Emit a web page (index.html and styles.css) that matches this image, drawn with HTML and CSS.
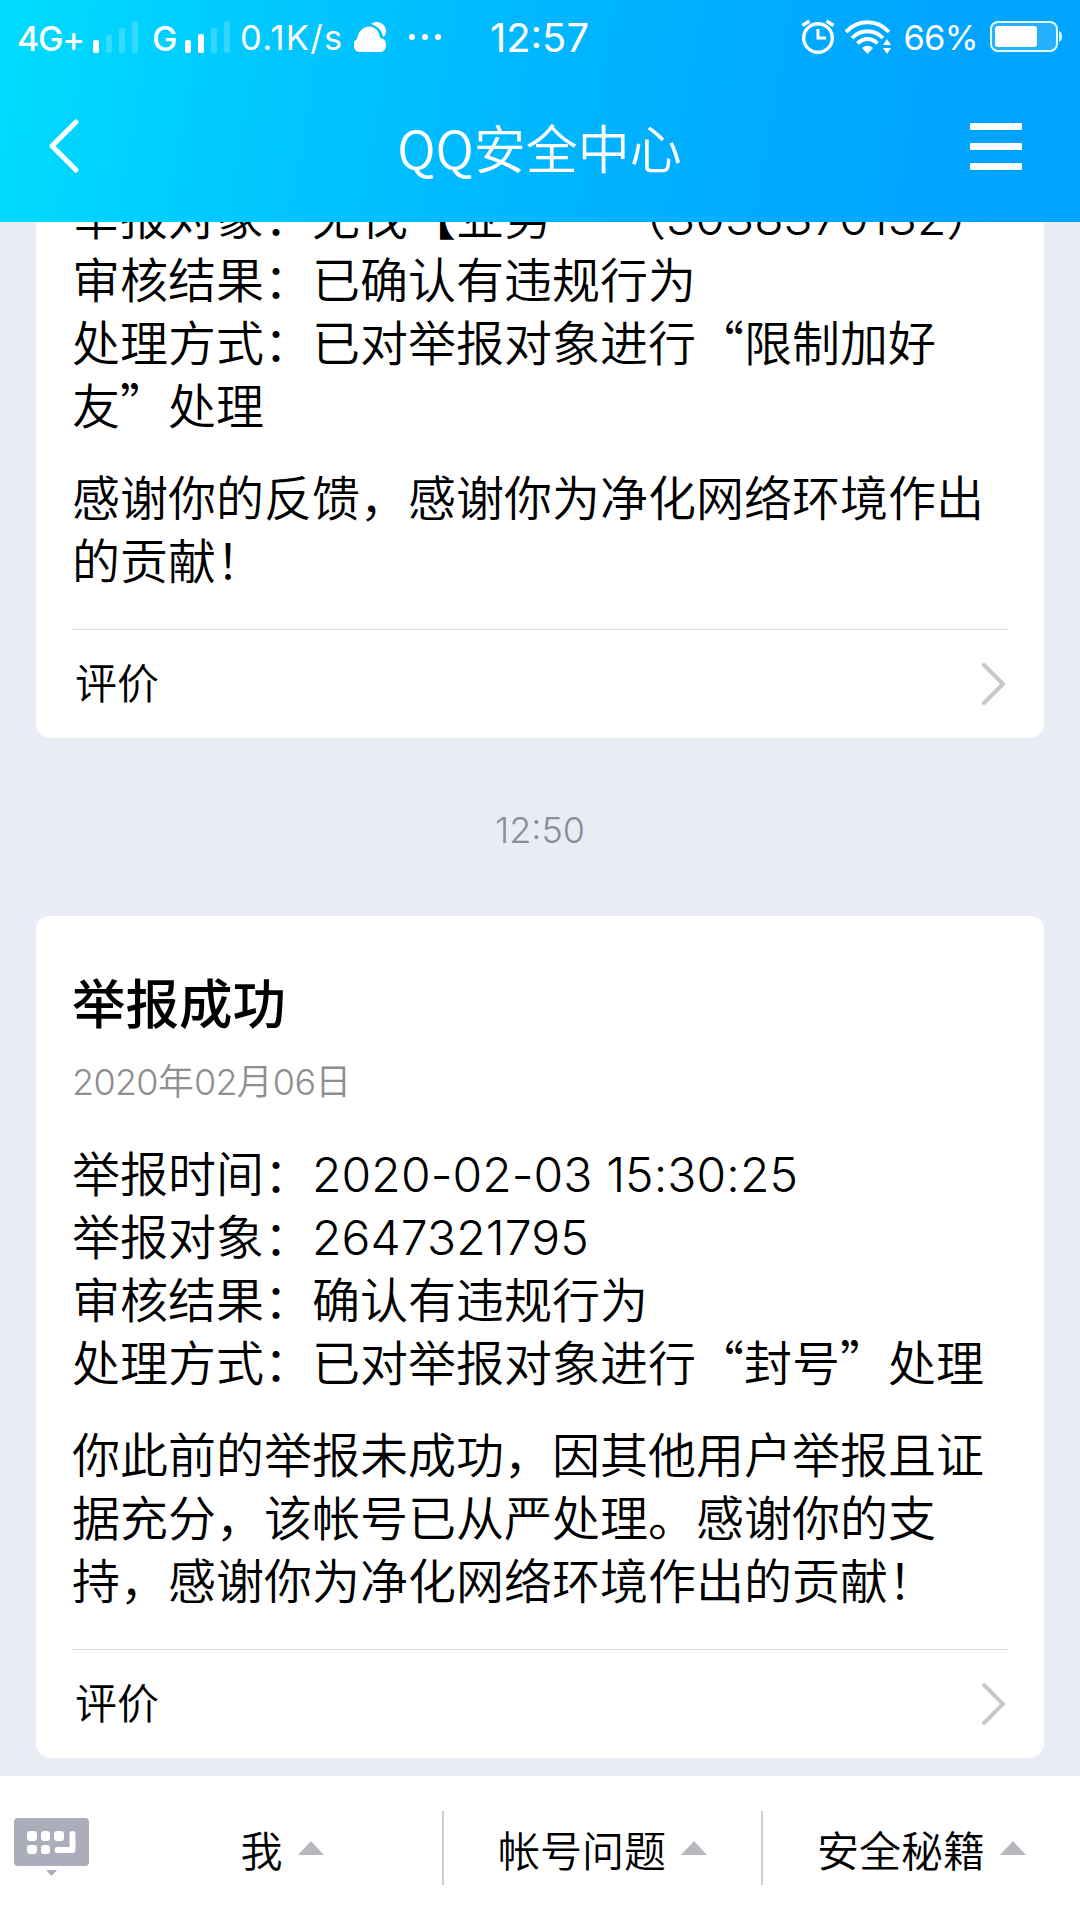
FILE: index.html
```html
<!DOCTYPE html>
<html lang="zh-CN">
<head>
    <meta charset="UTF-8">
    <meta name="viewport" content="width=device-width, initial-scale=1.0">
    <title>QQ安全中心</title>
    <link rel="stylesheet" href="styles.css">
</head>
<body>
    <div class="screen">
        <header class="header">
            <div class="status-bar">
                <div class="status-left">
                    <span class="network">4G+</span>
                    <svg class="signal" width="46" height="34" viewBox="0 0 46 34" fill="#fff">
                        <rect x="0" y="20" width="6" height="13" rx="2"/>
                        <rect x="13" y="14" width="6" height="19" rx="2" opacity=".2"/>
                        <rect x="26" y="8" width="6" height="25" rx="2" opacity=".2"/>
                        <rect x="39" y="1" width="6" height="32" rx="2" opacity=".2"/>
                    </svg>
                    <span class="network second">G</span>
                    <svg class="signal" width="46" height="34" viewBox="0 0 46 34" fill="#fff">
                        <rect x="0" y="20" width="6" height="13" rx="2"/>
                        <rect x="13" y="14" width="6" height="19" rx="2"/>
                        <rect x="26" y="8" width="6" height="25" rx="2" opacity=".2"/>
                        <rect x="39" y="1" width="6" height="32" rx="2" opacity=".2"/>
                    </svg>
                    <span class="speed">0.1K/s</span>
                    <svg class="cloud" width="34" height="32" viewBox="0 0 34 32" fill="#fff">
                        <path d="M17 3C24-2 32 3 32 10c0 3-1 5-3 6-1-6-5-11-12-13z"/>
                        <path d="M7 31a7 7 0 0 1-4-13C4 11 9 5.500 15 5.500c6 0 10 4 11 11.500 4 0 6 3 6 7s-2 7-6 7z" stroke="#00c2ff" stroke-width="1.500" paint-order="stroke"/>
                    </svg>
                    <svg class="dots" width="34" height="8" viewBox="0 0 34 8" fill="#fff">
                        <circle cx="4" cy="4" r="3"/>
                        <circle cx="17" cy="4" r="3"/>
                        <circle cx="30" cy="4" r="3"/>
                    </svg>
                </div>
                <div class="clock">12:57</div>
                <div class="status-right">
                    <svg class="alarm" width="34" height="36" viewBox="0 0 34 36" fill="none" stroke="#fff">
                        <circle cx="17" cy="19" r="14.3" stroke-width="3.4"/>
                        <path d="M17 10v9h8" stroke-width="3"/>
                        <path d="M1.5 6.5l7-4.5M32.500 6.500l-7-4.500" stroke-width="3.400"/>
                    </svg>
                    <svg class="wifi" width="46" height="34" viewBox="0 0 46 34" fill="none" stroke="#fff" stroke-width="3.8">
                        <path d="M1 12C13-1 32-1 44 12M7 18c9-9 22-9 31 0M12.500 23.500c6-6 14-6 20 0"/>
                        <path d="M17 28q5.500-4.500 11 0l-5.500 6z" fill="#fff" stroke="none"/>
                        <path d="M42 19l4 6h-8zM42 34l4-6h-8z" fill="#fff" stroke="none"/>
                    </svg>
                    <span class="percent">66%</span>
                    <svg class="battery" width="72" height="32" viewBox="0 0 72 32">
                        <rect x="1" y="1" width="66" height="29" rx="7" fill="#fff" fill-opacity=".15" stroke="#dff" stroke-width="2"/>
                        <rect x="5" y="5" width="42" height="21" rx="3" fill="#fff"/>
                        <path d="M69 10q3 1 3 5.500t-3 5.500z" fill="#dff"/>
                    </svg>
                </div>
            </div>
            <div class="title-bar">
                <svg class="back" width="32" height="56" viewBox="0 0 32 56" fill="none" stroke="#fff" stroke-width="5" stroke-linecap="round" stroke-linejoin="round">
                    <path d="M28 3L4 27l24 24"/>
                </svg>
                <h1 class="title">QQ安全中心</h1>
                <div class="menu"><i></i><i></i><i></i></div>
            </div>
        </header>

        <main class="messages">
            <section class="card card-first">
                <p>举报对象：无伐【业务<span class="blank"></span>（<span class="num">3038370132</span>）</p>
                <p>审核结果：已确认有违规行为</p>
                <p>处理方式：已对举报对象进行“限制加好友”处理</p>
                <p class="remark">感谢你的反馈，感谢你为净化网络环境作出的贡献！</p>
                <div class="rate">
                    <span>评价</span>
                    <svg width="26" height="44" viewBox="0 0 26 44" fill="none" stroke="#c8c8c8" stroke-width="4" stroke-linecap="round">
                        <path d="M3 3l19 19L3 41"/>
                    </svg>
                </div>
            </section>

            <div class="time">12:50</div>

            <section class="card">
                <h2 class="card-title">举报成功</h2>
                <div class="date"><span class="num">2020</span>年<span class="num">02</span>月<span class="num">06</span>日</div>
                <p>举报时间：<span class="num">2020-02-03 15:30:25</span></p>
                <p>举报对象：<span class="num">2647321795</span></p>
                <p>审核结果：确认有违规行为</p>
                <p>处理方式：已对举报对象进行“封号”处理</p>
                <p class="remark">你此前的举报未成功，因其他用户举报且证据充分，该帐号已从严处理。感谢你的支持，感谢你为净化网络环境作出的贡献！</p>
                <div class="rate">
                    <span>评价</span>
                    <svg width="26" height="44" viewBox="0 0 26 44" fill="none" stroke="#c8c8c8" stroke-width="4" stroke-linecap="round">
                        <path d="M3 3l19 19L3 41"/>
                    </svg>
                </div>
            </section>
        </main>

        <footer class="footer">
            <svg class="keyboard" width="76" height="60" viewBox="0 0 76 60">
                <rect x="0" y="0" width="75" height="48" rx="4" fill="#abadbb"/>
                <g fill="#fff">
                    <rect x="13" y="13" width="10" height="10" rx="3"/>
                    <rect x="27" y="13" width="9" height="10" rx="3"/>
                    <rect x="40" y="13" width="10" height="10" rx="3"/>
                    <rect x="13" y="27" width="10" height="9" rx="3"/>
                    <rect x="27" y="27" width="9" height="9" rx="3"/>
                </g>
                <path d="M58.500 16v16H43.500" fill="none" stroke="#fff" stroke-width="6" stroke-linecap="round" stroke-linejoin="round"/>
                <path d="M32 52h11l-5.500 6z" fill="#abadbb"/>
            </svg>
            <div class="tab">我<i class="arrow"></i></div>
            <div class="tab">帐号问题<i class="arrow"></i></div>
            <div class="tab">安全秘籍<i class="arrow"></i></div>
        </footer>
    </div>
</body>
</html>
```
FILE: styles.css
```css
* {
    box-sizing: border-box;
}
body {
    margin: 0;
    font-family: 'Noto Sans CJK SC', sans-serif;
    font-weight: 350;
    color: #000;
}
h1, h2, p {
    margin: 0;
}
svg {
    display: block;
    flex: none;
}
.screen {
    width: 1080px;
    height: 1920px;
    display: flex;
    flex-direction: column;
    overflow: hidden;
    background: #e9ecf5;
}

/* header */
.header {
    flex: none;
    height: 222px;
    color: #fff;
    background: linear-gradient(100deg, #00dcff 0%, #00c2ff 32%, #00b0ff 60%, #00a5ff 85%, #00a3ff 100%);
}
.status-bar {
    display: grid;
    grid-template-columns: 1fr auto 1fr;
    align-items: center;
    height: 74px;
    padding: 0 18px 0 17px;
    font-family: Inter, sans-serif;
    font-weight: 400;
}
.status-left, .status-right {
    display: flex;
    align-items: center;
}
.status-right {
    justify-content: flex-end;
}
.network {
    width: 66px;
    margin-right: 10px;
    padding-top: 4px;
    font-size: 34px;
    font-weight: 500;
    letter-spacing: -1.2px;
    line-height: 36px;
}
.second {
    width: 23px;
    margin-left: 13px;
}
.speed {
    width: 105px;
    margin-left: 9px;
    font-size: 34.5px;
    letter-spacing: 1.3px;
    white-space: nowrap;
}
.cloud {
    margin-left: 9px;
}
.dots {
    margin-left: 20px;
}
.clock {
    font-size: 40px;
}
.wifi {
    margin-left: 10px;
}
.percent {
    margin-left: 12px;
    font-size: 34.5px;
    letter-spacing: -0.7px;
}
.battery {
    margin-left: 12px;
}
.title-bar {
    display: grid;
    grid-template-columns: 1fr auto 1fr;
    align-items: center;
    height: 145px;
    padding: 0 58px 0 48px;
}
.title {
    margin-left: 9px;
    font-size: 52px;
    font-weight: 350;
    line-height: 72px;
}
.menu {
    display: flex;
    flex-direction: column;
    justify-self: end;
    gap: 13px;
    width: 52px;
}
.menu i {
    height: 7px;
    border-radius: 1px;
    background: #fff;
}

/* messages */
.messages {
    flex: 1;
    min-height: 0;
    padding: 0 36px;
    overflow: hidden;
}
.card {
    padding: 46px 36px 0;
    border-radius: 14px;
    background: #fff;
    font-size: 48px;
    line-height: 63px;
}
.card-first {
    margin-top: -39px;
    padding-top: 0;
}
.blank {
    display: inline-block;
    width: 66px;
}
.num {
    font-family: Inter, sans-serif;
    font-weight: 350;
    letter-spacing: 0.1px;
    line-height: 1;
}
.remark {
    margin-top: 29px;
}
.rate {
    display: flex;
    align-items: center;
    justify-content: space-between;
    height: 109px;
    margin-top: 39px;
    padding: 0 1px 0 3px;
    border-top: 1px solid #dcdfe0;
    font-size: 42px;
}
.rate span {
    padding-bottom: 8px;
}
.time {
    height: 178px;
    font-family: Inter, sans-serif;
    font-size: 36px;
    font-weight: 350;
    line-height: 184px;
    text-align: center;
    color: #8a8d9a;
}
.card-title {
    font-size: 53.5px;
    font-weight: 500;
    line-height: 78px;
}
.date {
    margin: 15px 0 37px;
    font-size: 36px;
    line-height: 48px;
    color: #8f8f8f;
}
.date .num {
    letter-spacing: -0.7px;
}

/* footer */
.footer {
    display: flex;
    align-items: center;
    flex: none;
    height: 144px;
    padding-left: 14px;
    background: #fff;
    font-size: 42px;
}
.tab {
    display: flex;
    align-items: center;
    justify-content: center;
    gap: 15px;
    width: 319px;
    height: 74px;
    border-left: 2px solid #ccc;
}
.keyboard + .tab {
    width: 352px;
    padding-left: 32px;
    border-left: none;
}
.arrow {
    border: 13px solid transparent;
    border-top: none;
    border-bottom: 14px solid #b7b8bf;
}
```
